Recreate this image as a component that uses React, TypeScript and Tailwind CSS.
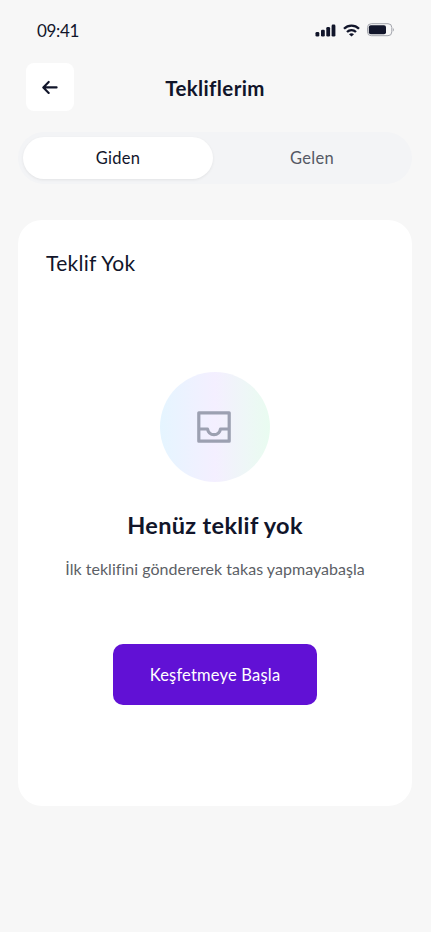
import React from "react";

function SignalIcon() {
  return (
    <svg width="21" height="13" viewBox="0 0 21 13" fill="#11152a">
      <rect x="0.5" y="8" width="3.8" height="4.6" rx="1.3" />
      <rect x="6" y="5.8" width="3.8" height="6.8" rx="1.3" />
      <rect x="11.3" y="3" width="3.8" height="9.6" rx="1.3" />
      <rect x="16.6" y="0.6" width="3.8" height="12" rx="1.3" />
    </svg>
  );
}

function WifiIcon() {
  return (
    <svg width="17" height="13" viewBox="0 0 17 13" fill="none" stroke="#11152a" strokeWidth="2.3">
      <path d="M1 4.8C5.2 0.6 11.8 0.6 16 4.8" />
      <path d="M4 8C6.5 5.5 10.5 5.5 13 8" />
      <path d="M8.5 12.6L6 10.3C7.4 9 9.6 9 11 10.3Z" fill="#11152a" stroke="none" />
    </svg>
  );
}

function BatteryIcon() {
  return (
    <svg width="28" height="14" viewBox="0 0 28 14" fill="none">
      <rect x="0.5" y="0.7" width="24.3" height="12" rx="3.8" stroke="#a1a3ab" />
      <rect x="1.8" y="2.2" width="17.2" height="9" rx="2" fill="#11152a" />
      <path d="M25.9 4.9V8.5C27.2 7.9 27.2 5.5 25.9 4.9Z" fill="#a1a3ab" />
    </svg>
  );
}

function BackIcon() {
  return (
    <svg width="16" height="14" viewBox="0 0 16 14" fill="none" stroke="#11152a" strokeWidth="2.1" strokeLinecap="round" strokeLinejoin="round">
      <path d="M14.6 7.4H1.4M6.7 1.9L1.3 7.4L6.7 12.9" />
    </svg>
  );
}

function InboxIcon() {
  return (
    <svg width="34" height="32" viewBox="0 0 34 32" fill="none" stroke="#9ca0b1" strokeWidth="3.2" strokeLinejoin="round">
      <rect x="1.8" y="1.8" width="30.4" height="28.4" />
      <path d="M2 18H10.5C12 25.6 22 25.6 23.5 18H32" />
    </svg>
  );
}

export default function App() {
  return (
    <main className="flex h-[932px] w-[431px] flex-col overflow-hidden bg-[#f7f7f7] font-['Lato','Noto_Sans',sans-serif] text-[#11152a] [font-variant-ligatures:none]">
      <header className="flex h-[60px] shrink-0 items-center justify-between pr-[36px] pl-[37px]">
        <time className="pt-px text-[17px] tracking-[-0.35px]">09:41</time>
        <div className="flex items-center gap-[7px]">
          <SignalIcon />
          <WifiIcon />
          <BatteryIcon />
        </div>
      </header>

      <nav className="mt-[3px] grid h-12 shrink-0 grid-cols-[48px_1fr_48px] items-center pr-[27px] pl-[26px]">
        <button className="flex h-12 w-12 items-center justify-center rounded-lg bg-white" aria-label="Geri">
          <BackIcon />
        </button>
        <h1 className="pt-[2px] text-center text-[20.5px] leading-6 font-bold tracking-[0.38px]">Tekliflerim</h1>
      </nav>

      <div className="mr-[19px] ml-[18px] mt-[21px] flex h-[52px] shrink-0 rounded-full bg-[#f3f4f6] p-[5px]">
        <button className="h-[42px] w-[190px] rounded-full bg-white text-[16.5px] tracking-[0.3px] shadow-[0_1px_3px_rgba(0,0,0,0.07)]">Giden</button>
        <button className="flex-1 pl-1 text-[16.5px] tracking-[0.3px] text-[#555964]">Gelen</button>
      </div>

      <section className="mr-[19px] ml-[18px] mt-[36px] flex h-[586px] shrink-0 flex-col items-center rounded-[24px] bg-white">
        <h2 className="mt-[29px] self-start pl-[28px] text-[21px] leading-7 tracking-[0.3px]">Teklif Yok</h2>
        <div className="mt-[95px] flex h-[110px] w-[110px] items-center justify-center rounded-full bg-linear-to-r from-[#e5f5ff] via-[#f4efff] to-[#e9fcf0] pr-[2px]">
          <InboxIcon />
        </div>
        <h3 className="mt-[28px] text-[23.5px] leading-[30px] font-bold tracking-[0.35px]">Henüz teklif yok</h3>
        <p className="mt-[17px] text-[16px] leading-6 tracking-[0.03px] whitespace-nowrap text-[#5c5f66]">İlk teklifini göndererek takas yapmayabaşla</p>
        <button className="mt-[63px] h-[61px] w-[204px] rounded-[10px] bg-[#6111d5] pt-[2px] text-[16.5px] tracking-[0.2px] text-white">Keşfetmeye Başla</button>
      </section>
    </main>
  );
}
